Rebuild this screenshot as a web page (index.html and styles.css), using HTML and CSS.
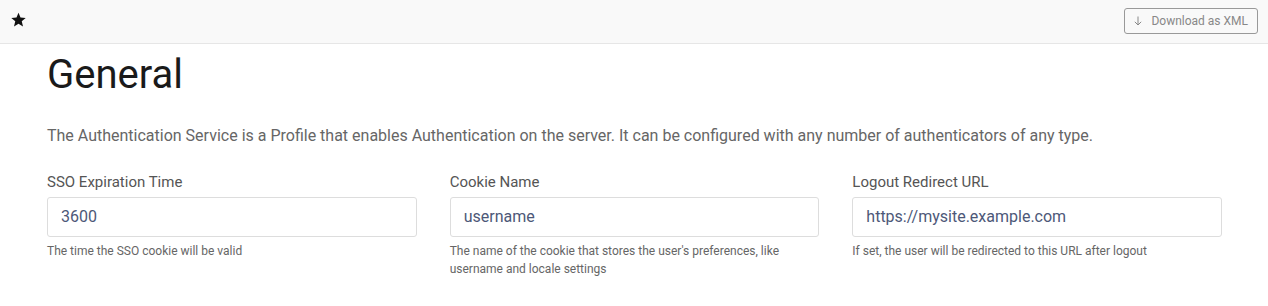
FILE: index.html
```html
<!DOCTYPE html>
<html>
  <head>
    <title>Authentication Service</title>
    <link rel="stylesheet" href="styles.css">
  </head>
  <body>
    <div class="topbar">
      <svg class="star" width="15" height="15" viewBox="0 0 24 24">
        <path d="M12 1l3.2 7.7 8.3.7-6.3 5.4 2 8.2L12 18.6 4.8 23l2-8.2L.5 9.4l8.3-.7z" fill="#111"/>
      </svg>
      <a href="#" class="btn-download">
        <svg width="8" height="10" viewBox="0 0 8 10">
          <path d="M4 0.5v8.5M0.8 5.8L4 9l3.2-3.2" fill="none" stroke="#888" stroke-width="1"/>
        </svg>
        Download as XML
      </a>
    </div>

    <div class="content">
      <h1>General</h1>
      <p class="intro">The Authentication Service is a Profile that enables Authentication on the server. It can be configured with any number of authenticators of any type.</p>

      <div class="fields">
        <div class="field">
          <label>SSO Expiration Time</label>
          <input type="text" value="3600">
          <div class="help">The time the SSO cookie will be valid</div>
        </div>
        <div class="field">
          <label>Cookie Name</label>
          <input type="text" value="username">
          <div class="help">The name of the cookie that stores the user's preferences, like username and locale settings</div>
        </div>
        <div class="field">
          <label>Logout Redirect URL</label>
          <input type="text" value="https://mysite.example.com">
          <div class="help">If set, the user will be redirected to this URL after logout</div>
        </div>
      </div>
    </div>
  </body>
</html>
```

FILE: styles.css
```css
body {
  font-family: Roboto, "Liberation Sans", sans-serif;
  margin: 0;
  background-color: #fff;
}
.topbar {
  height: 43px;
  background-color: #f9f9f9;
  border-bottom: 1px solid #e6e6e6;
  display: flex;
  align-items: center;
  justify-content: space-between;
  padding: 0 10px 0 11px;
}
.star {
  display: block;
  align-self: flex-start;
  margin-top: 12px;
}
.btn-download {
  display: flex;
  align-items: center;
  gap: 9px;
  box-sizing: border-box;
  height: 26px;
  padding: 0 9px;
  border: 1px solid #999;
  border-radius: 3px;
  color: #888;
  font-size: 12px;
  white-space: nowrap;
  text-decoration: none;
  margin-top: -1px;
}
.content {
  padding: 0 46px 0 47px;
}
h1 {
  font-size: 40px;
  font-weight: 400;
  line-height: 48px;
  color: #1a1a1a;
  margin: 7px 0 0;
}
.intro {
  font-size: 16px;
  line-height: 22px;
  color: #666;
  margin: 26px 0 0;
}
.fields {
  display: grid;
  grid-template-columns: repeat(3, 1fr);
  gap: 33px;
  margin-top: 24px;
}
.field label {
  display: block;
  font-size: 15px;
  line-height: 22.5px;
  color: #555;
  margin-bottom: 3px;
}
.field input {
  display: block;
  box-sizing: border-box;
  width: 100%;
  height: 40px;
  padding: 0 13px;
  border: 1px solid #ddd;
  border-radius: 3px;
  font-family: Roboto, "Liberation Sans", sans-serif;
  font-size: 16px;
  color: #4d5878;
  outline: none;
}
.help {
  font-size: 12px;
  line-height: 18px;
  color: #666;
  margin-top: 5px;
}
```
